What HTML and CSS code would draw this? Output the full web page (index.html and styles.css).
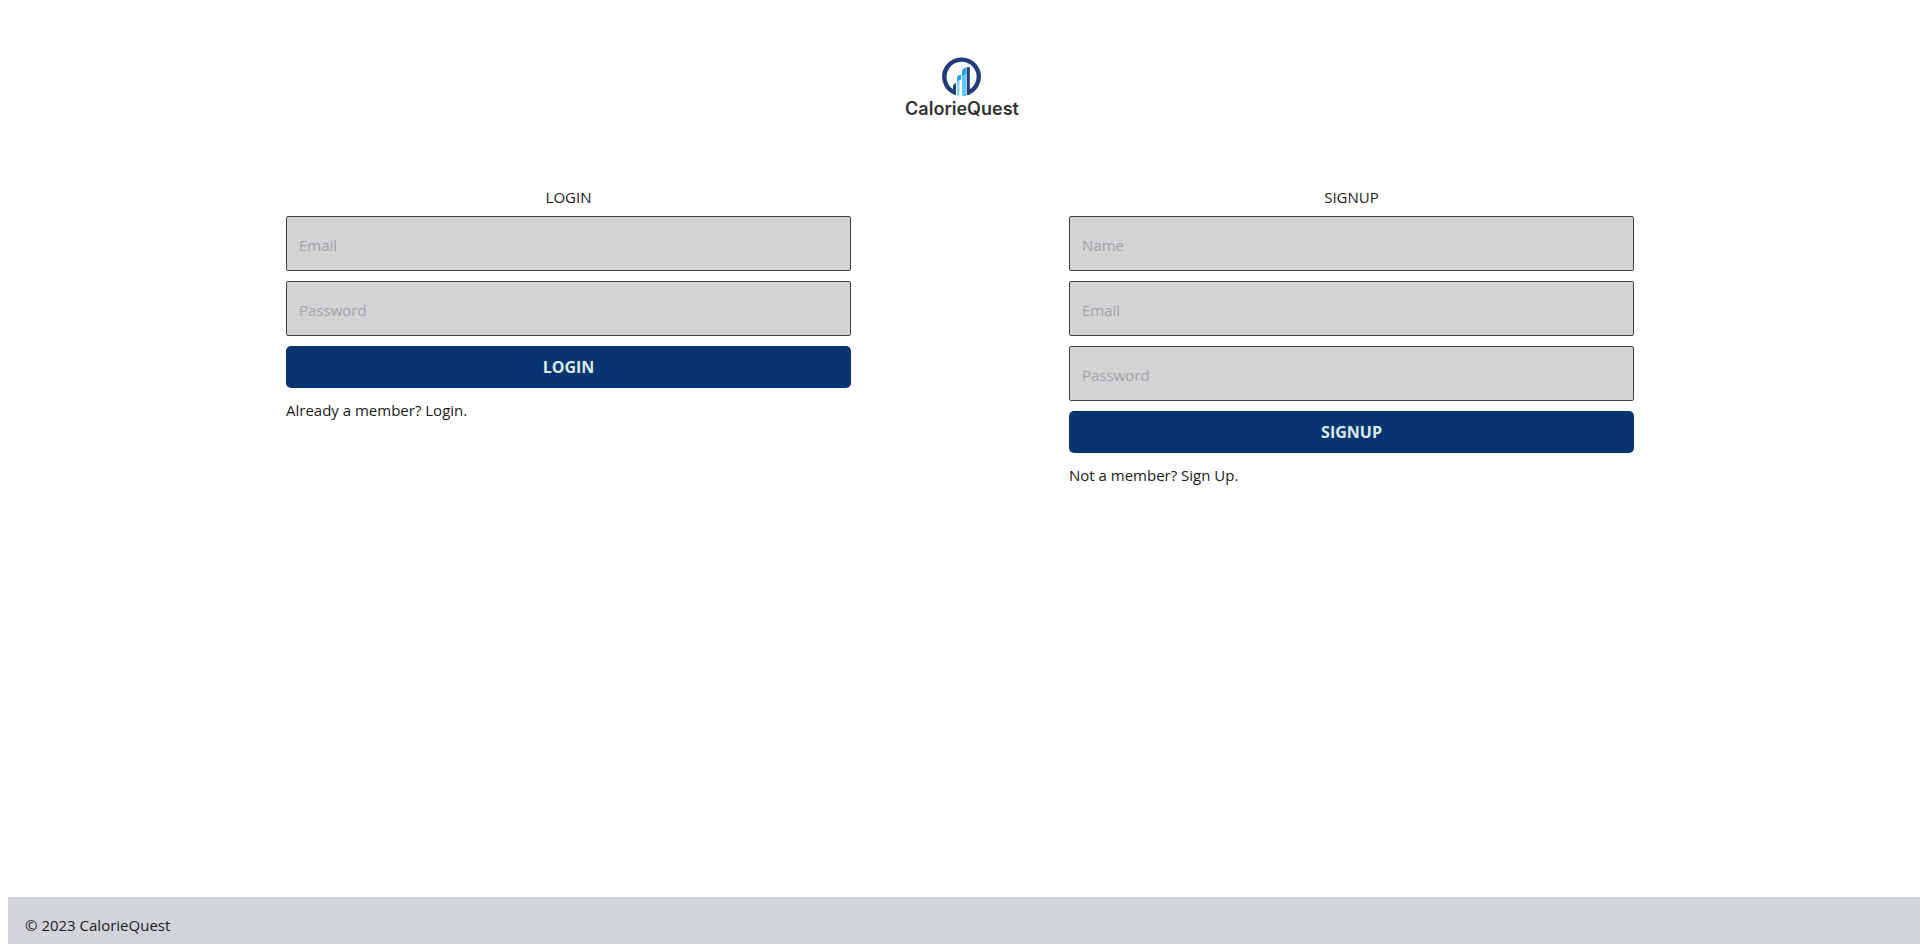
FILE: index.html
```html
<!DOCTYPE html>
<html lang="en">
<head>
<meta charset="utf-8">
<meta name="viewport" content="width=device-width, initial-scale=1">
<title>CalorieQuest</title>
<link rel="stylesheet" href="styles.css">
</head>
<body class="page">
<header class="brand">
  <svg class="brand-icon" viewBox="0 0 40 40" aria-hidden="true">
    <path d="M12.500 35.500A17.200 17.200 0 1 1 27 35.300" fill="none" stroke="#203c7a" stroke-width="4.400"/>
    <path d="M11 28.500l3-3v12.800l-3-1.500z" fill="#203c7a"/>
    <path d="M15 21c0-2 1.500-3.300 4.200-3.300v4.300c-1 1.500-2.500 1.500-4.200 3z" fill="#23a3ee"/>
    <path d="M15 24.500l2.500-1.500v15.500h-2.500z" fill="#7fd3f7"/>
    <path d="M20 15c0-2.500 1.500-4 4.300-4.500v6c-1 1.800-2.500 1.500-4.300 3z" fill="#23a3ee"/>
    <path d="M20 19.500l4.300-3v22.500h-4.300z" fill="#62c9f5"/>
    <path d="M24.800 10.200h3v27.800h-3z" fill="#203c7a"/>
  </svg>
  <span class="brand-name">CalorieQuest</span>
</header>
<main class="forms">
  <form class="form">
    <h2 class="form-title">LOGIN</h2>
    <input class="field" type="email" placeholder="Email" aria-label="Email">
    <input class="field" type="password" placeholder="Password" aria-label="Password">
    <button class="submit" type="submit">LOGIN</button>
    <a class="hint" href="#login">Already a member? Login.</a>
  </form>
  <form class="form">
    <h2 class="form-title">SIGNUP</h2>
    <input class="field" type="text" placeholder="Name" aria-label="Name">
    <input class="field" type="email" placeholder="Email" aria-label="Email">
    <input class="field" type="password" placeholder="Password" aria-label="Password">
    <button class="submit" type="submit">SIGNUP</button>
    <a class="hint" href="#signup">Not a member? Sign Up.</a>
  </form>
</main>
<footer class="footer">© 2023 CalorieQuest</footer>
</body>
</html>
```
FILE: styles.css
```css
* {
  box-sizing: border-box;
}

.page {
  display: flex;
  flex-direction: column;
  min-height: 100vh;
  margin: 0;
  padding-left: 8px;
  background: #fff;
  color: #1b1b1b;
  font: 15px/24px "Open Sans", "Noto Sans", sans-serif;
}

.brand {
  display: flex;
  flex-direction: column;
  align-items: center;
  padding: 57px 4px 0 0;
}

.brand-icon {
  width: 40px;
  height: 40px;
}

.brand-name {
  color: #333;
  font: 600 18px/24px Inter, sans-serif;
}

.forms {
  display: grid;
  grid-template-columns: 1fr 1fr;
  gap: 218px;
  flex: 1;
  align-items: start;
  padding: 67px 286px 0 278px;
}

.form {
  display: flex;
  flex-direction: column;
  gap: 10px;
}

.form-title {
  margin: 0;
  font-size: 15px;
  font-weight: 400;
  line-height: 18px;
  text-align: center;
}

.field {
  width: 100%;
  height: 55px;
  padding: 3px 12px 0;
  border: 1px solid #444;
  border-radius: 2px;
  background: #d3d3d3;
  color: #1b1b1b;
  font: inherit;
}

.field::placeholder {
  color: #9ca3af;
  opacity: 1;
}

.submit {
  height: 42px;
  padding: 0 16px;
  border: 0;
  border-radius: 5px;
  background: #063571;
  color: #dcebe8;
  font: inherit;
  font-size: 16px;
  font-weight: 700;
  cursor: pointer;
}

.hint {
  align-self: flex-start;
  color: inherit;
  text-decoration: none;
}

.footer {
  padding: 16px 17px 7px;
  background: #d1d5db;
}
```
